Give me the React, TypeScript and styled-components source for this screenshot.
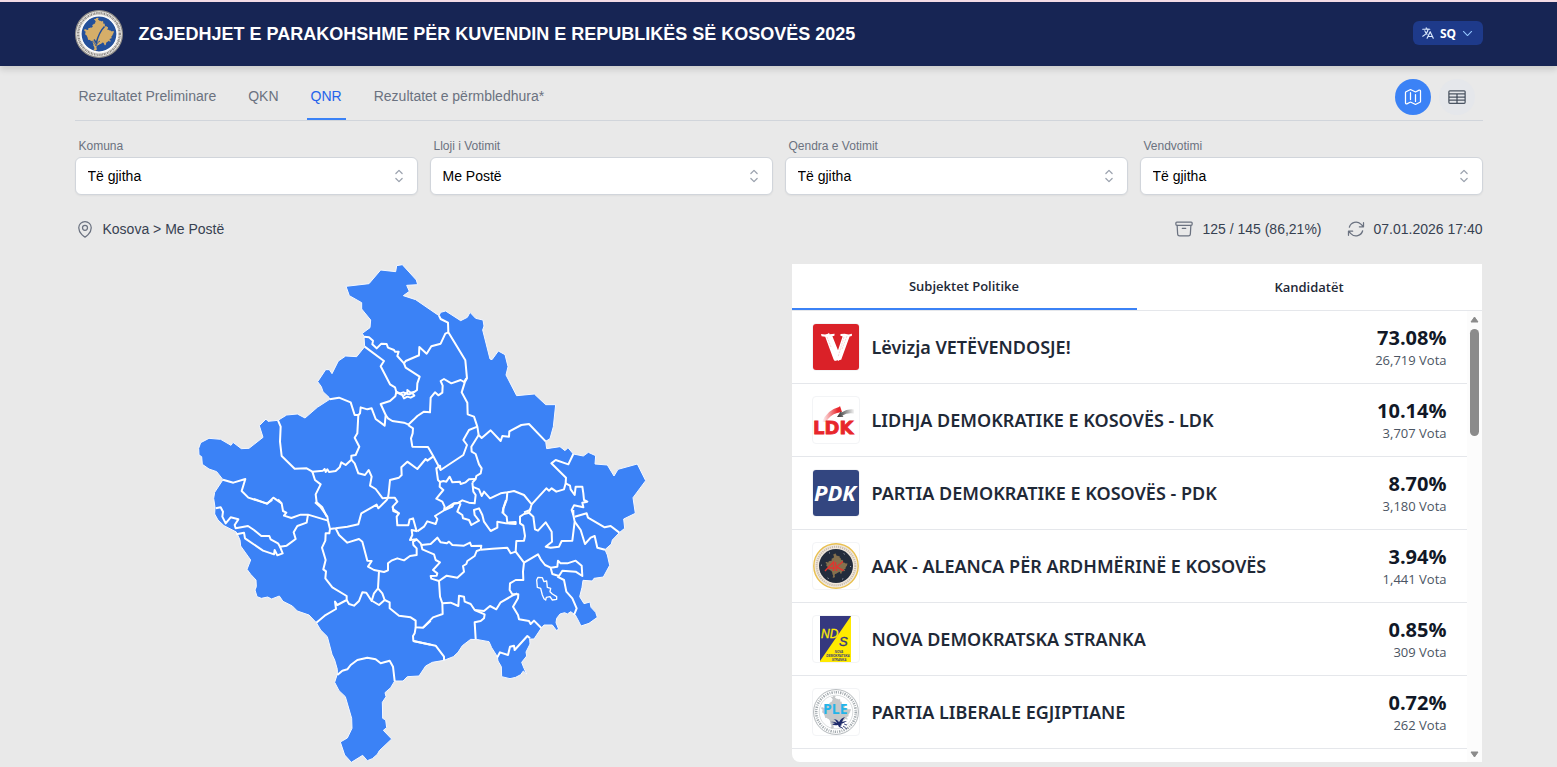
import React from "react";
import styled, { createGlobalStyle } from "styled-components";
import {
  HiOutlineMap,
  HiOutlineTableCells,
  HiOutlineArchiveBox,
  HiOutlineArrowPath,
  HiOutlineMapPin,
  HiOutlineLanguage,
  HiOutlineChevronDown,
  HiChevronUpDown,
} from "react-icons/hi2";

const sans = `"Liberation Sans", Arial, sans-serif`;
const humanist = `"Noto Sans", "Open Sans", sans-serif`;
const humanistLight = `"Open Sans", "Noto Sans", sans-serif`;

const GlobalStyle = createGlobalStyle`
  *, *::before, *::after { box-sizing: border-box; }
  html { background: #e9e9e9; }
  body { margin: 0; font-family: ${sans}; font-size: 14px; color: #374151; overflow-x: hidden; }
  button, select { font: inherit; }
`;

const Container = styled.div`
  width: 100%;
  max-width: 1440px;
  margin: 0 auto;
  padding: 0 16px;
`;

const Header = styled.header`
  background: #172554;
  border-top: 2px solid #f3dbe5;
  box-shadow: 0 4px 6px rgba(0, 0, 0, 0.12);
`;

const HeaderInner = styled(Container)`
  display: flex;
  align-items: center;
  gap: 16px;
  height: 64px;
`;

const Title = styled.h1`
  flex: 1;
  margin: 0;
  font-size: 18px;
  line-height: 28px;
  font-weight: 700;
  color: #fff;
`;

const LanguageButton = styled.button`
  display: flex;
  align-items: center;
  justify-content: space-between;
  width: 70px;
  height: 24px;
  margin-bottom: 2px;
  padding: 0 8px;
  border: 0;
  border-radius: 6px;
  background: #1e3a8a;
  color: #fff;
  font-family: ${humanist};
  font-size: 12px;
  font-weight: 700;
  svg { color: #dbeafe; stroke-width: 2px; }
  svg:last-child { color: #93c5fd; }
`;

const NavBar = styled.div`
  display: flex;
  align-items: center;
  justify-content: space-between;
  height: 55px;
  border-bottom: 1px solid #d1d5db;
`;

const NavTabs = styled.nav`
  display: flex;
  gap: 24px;
  height: 100%;
`;

const NavLink = styled.a<{ $active?: boolean }>`
  display: flex;
  align-items: center;
  padding: 8px 4px 0;
  border-bottom: 2px solid ${(p) => (p.$active ? "#3b82f6" : "transparent")};
  color: ${(p) => (p.$active ? "#2563eb" : "#6b7280")};
  text-decoration: none;
`;

const ViewToggle = styled.div`
  display: flex;
  gap: 8px;
  padding: 8px 8px 0 0;
`;

const RoundButton = styled.button<{ $active?: boolean }>`
  display: grid;
  place-items: center;
  width: 36px;
  height: 36px;
  padding: 0;
  border: 0;
  border-radius: 50%;
  background: ${(p) => (p.$active ? "#3b82f6" : "#e5e7eb")};
  color: ${(p) => (p.$active ? "#fff" : "#4b5563")};
`;

const Filters = styled.div`
  display: grid;
  grid-template-columns: repeat(4, 1fr);
  gap: 12px;
  padding-top: 17px;
`;

const FilterLabel = styled.label`
  display: block;
  padding: 0 4px 3px;
  font-size: 12px;
  line-height: 16px;
  color: #6b7280;
`;

const SelectBox = styled.div`
  position: relative;
  height: 38px;
  svg {
    position: absolute;
    right: 9px;
    top: 9px;
    color: #9ca3af;
    pointer-events: none;
  }
`;

const Select = styled.select`
  appearance: none;
  width: 100%;
  height: 100%;
  padding: 0 40px 0 12px;
  border: 1px solid #d1d5db;
  border-radius: 6px;
  background: #fff;
  box-shadow: 0 1px 2px rgba(0, 0, 0, 0.05);
  color: #000;
`;

const StatusBar = styled.div`
  display: flex;
  align-items: center;
  gap: 24px;
  padding-top: 24px;
  height: 44px;
`;

const StatusItem = styled.span<{ $grow?: boolean }>`
  display: flex;
  align-items: center;
  gap: 8px;
  flex: ${(p) => (p.$grow ? 1 : "none")};
  svg { color: #6b7280; }
`;

const Columns = styled.div`
  display: grid;
  grid-template-columns: 1fr 1fr;
  gap: 27px;
  padding: 25px 1px 4px 0;
`;

const MapPane = styled.section`
  display: flex;
  justify-content: center;
  svg { display: block; }
`;

const Panel = styled.section`
  display: flex;
  flex-direction: column;
  height: 498px;
  border-radius: 0 0 0 8px;
  overflow: hidden;
  background: #fff;
  font-family: ${humanist};
`;

const PanelTabs = styled.div`
  display: flex;
  height: 47px;
  flex: none;
  border-bottom: 1px solid #e5e7eb;
`;

const PanelTab = styled.button<{ $active?: boolean }>`
  flex: 1;
  padding: 0;
  border: 0;
  border-bottom: ${(p) => (p.$active ? "2px solid #3b82f6" : "0")};
  background: none;
  font-family: ${humanistLight};
  font-size: 13px;
  font-weight: 600;
  color: #1f2937;
`;

const ListArea = styled.div`
  display: flex;
  flex: 1;
  min-height: 0;
`;

const PartyList = styled.ul`
  flex: 1;
  margin: 0;
  padding: 0;
  list-style: none;
  overflow-y: auto;
  scrollbar-width: none;
`;

const PartyRow = styled.li`
  display: flex;
  align-items: center;
  gap: 12px;
  height: 73px;
  padding: 0 20px;
  border-bottom: 1px solid #e5e7eb;
`;

const PartyLogo = styled.span`
  flex: none;
  width: 48px;
  height: 48px;
  border: 1px solid #f3f4f6;
  border-radius: 4px;
  overflow: hidden;
  svg { display: block; }
`;

const PartyName = styled.span`
  flex: 1;
  font-size: 18px;
  line-height: 28px;
  font-weight: 600;
  color: #1f2937;
`;

const PartyResult = styled.div`
  padding-top: 2px;
  text-align: right;
`;

const Percent = styled.div`
  font-family: ${humanistLight};
  font-size: 20px;
  line-height: 24px;
  font-weight: 700;
  color: #111827;
`;

const Votes = styled.div`
  font-family: ${humanistLight};
  font-size: 13px;
  line-height: 20px;
  color: #4b5563;
`;

const ScrollTrack = styled.div`
  display: flex;
  flex-direction: column;
  align-items: center;
  width: 15px;
  padding: 5px 0 4px;
  background: #fcfcfc;
`;

const ScrollThumb = styled.div`
  width: 9px;
  height: 107px;
  margin: 6px 0 auto;
  border-radius: 5px;
  background: #8b8b8b;
`;

type Pt = [number, number];
const parse = (s: string): Pt[] =>
  s.trim().split(/\s+/).map((p) => p.split(",").map(Number) as Pt);
const move = (s: string, dx: number, dy: number) =>
  parse(s).map(([x, y]) => `${x + dx},${y + dy}`).join(" ");

/* The map is drawn in four sheets: north-west, north-east, south-west, south-east. */
const EAST = 630;
const SOUTH = 735;

const border = [
  move("466,94 535,86 570,45 615,50 618,32 635,29 677,75 681,89 648,91 656,109 638,122 675,134 720,165", 0, 0),
  move("115,182 120,172 135,168 180,197 200,187 208,172 225,190 247,195 250,213 246,225 268,312 274,314 293,288 313,299 322,335 316,360 348,422 401,417 435,449 465,449 458,515 448,551 435,559 438,581 478,575 493,587 502,578 518,597 548,603 563,592 585,602 583,627 620,630 640,663 652,643 710,627 735,677 697,728", EAST, 0),
  move("698,0 704,40 669,57 672,85 656,98 635,120 632,132 613,149 620,165 627,196 608,231 580,235 575,243 547,241 544,262 537,290 550,311 568,306 571,322 585,337 590,352 565,370 541,378 532,360 524,345 510,335 500,342 492,338 478,342 468,355 466,368 474,388 467,391 455,375 430,375 422,384 400,417 387,417 388,432 376,456 378,468 363,487 370,505 378,522 368,513 360,524 345,532 328,536 303,530 302,500 292,483 290,470 273,443 265,425 232,419 210,418 185,437 172,457 158,470 130,481 95,487 75,498 55,528 20,530", EAST, SOUTH),
  move("637,543 612,543 600,563 583,578 586,590 575,607 576,655 585,660 588,683 578,691 603,717 566,752 560,763 545,776 530,782 516,766 482,787 462,765 449,726 470,714 484,685 483,655 464,590 445,572 432,547 440,522 440,508 432,480 424,463 410,410 390,390 377,368 355,345 320,333 305,318 277,304 266,288 243,297 231,291 212,295 199,290 193,270 197,260 196,240 180,223 169,208 180,180 150,138 148,120 137,96 100,77 82,60 72,42 73,22", 0, SOUTH),
  move("69,730 72,712 97,674 78,650 55,642 35,628 33,605 25,600 24,580 30,563 55,550 90,553 121,571 127,562 152,581 175,580 217,547 206,512 226,492 232,499 262,496 288,480 320,477 343,489 380,457 417,433 415,427 397,410 392,395 381,380 405,344 416,344 424,356 443,318 465,303 498,305 522,275 520,245 515,235 538,218 540,195 513,162 513,143 476,122", 0, 0),
].join(" ");

const northWest = [
  "520,245 535,247 547,257 545,268 558,280 572,266 588,267 592,278 610,285 613,290 624,290 620,303 640,325 645,318 687,300",
  "522,275 580,318 570,334 598,388 613,397 617,411 628,415 638,412 650,416 650,405 660,413 672,410",
  "617,411 635,420 640,430 650,425 660,428 671,422 665,414 655,418 645,415 640,422",
  "617,411 614,424 598,438 570,447 585,480 582,512 555,492 543,460 530,463 510,457 508,475 503,480",
  "417,433 445,428 480,442 492,480 503,480 500,535 492,548 506,575 495,600 482,602 482,614 465,630 452,622 447,637 435,648 415,651 410,643 405,651 402,642 397,647 365,650 348,640 312,641 273,603 268,560 270,515 262,496",
  "585,480 592,490 605,498 640,503 652,508",
  "482,614 492,625 503,655 523,660 534,645 543,665 538,692 555,702 576,730 592,728",
  "97,674 128,683 164,672 153,708 173,728 230,746 248,728 273,745",
  "365,650 373,675 390,688 375,718 378,742 395,757 408,785",
  "592,728 612,728 620,740 606,755 608,768 625,775",
];

const northEast = [
  "55,300 56,276 78,296 92,274 120,266 134,236 143,232",
  "115,182 120,192 142,203 143,232 194,316 199,370 193,380 183,412 200,443 201,478 220,485 230,515 234,540 243,549 270,526 300,558 305,543 325,545 326,529 362,510 385,507 435,559",
  "10,325 15,338 57,365 50,385 49,405 40,412",
  "22,510 40,493 50,483 70,470 88,472 90,428 103,412 113,421 125,413 126,392 120,378 130,372 152,385 180,375 190,381 197,370",
  "22,510 37,520 36,535 31,550 35,575 82,576 98,604 120,645 188,600 199,570 188,555 205,525 230,515",
  "98,604 80,617 75,612 50,642 20,620 2,637 3,660 -5,668 -32,675 -36,715 -38,728",
  "234,540 212,575 213,590 225,597 235,628 243,640 240,655 227,663 225,672 215,683",
  "225,672 205,673 195,682 180,687 178,680 155,682 147,665 137,680 128,678 118,681",
  "120,645 118,632 107,640 112,675 118,681 117,695 128,705 107,731 125,740 132,755 130,765",
  "215,683 218,710 225,720 222,745 205,743 185,736 170,745 158,746 132,762",
  "215,695 235,703 243,723 250,710 268,730 300,715 320,712 340,708 370,720 393,748 388,765 370,772",
  "320,712 318,735 308,760 305,775",
  "393,748 437,700 445,707 453,700 467,710 490,703 495,685 496,668 452,625 465,615 503,628 518,597",
  "495,685 508,692 510,703 522,720 525,695 545,695 548,715 550,735 560,740 545,743 548,757 520,751 513,765 518,780",
];

const southWest = [
  "190,-3 228,11 245,0",
  "262,-2 273,10 277,33 287,38 280,47 302,54 330,44 352,44 412,62",
  "75,25 90,22 97,35 95,50 105,70 120,52 143,58 132,75 135,85 172,78 190,90 212,108 236,108 240,118 262,130 268,140 288,137 315,117 309,97 320,78 348,68 352,44",
  "137,103 160,98 163,115 217,152 250,163 252,150 260,166 276,160 268,140",
  "373,7 390,22 410,50 412,62 418,87 416,100 405,100 404,122 394,143 405,180 398,208 406,214 404,235 425,262 468,288 468,300 440,315 433,305 436,327 402,347 377,368",
  "418,87 435,85 470,80 503,73 512,40 558,14 563,25 588,0 592,-7",
  "435,85 445,105 470,128 505,117 515,125 530,182 543,183 532,200 550,210 565,213 562,265 550,280 543,303 527,278 515,277 505,303 490,317 475,312 468,300",
  "565,213 580,216 592,211 592,190 602,182 620,175 640,181 658,168 678,165 678,145 668,135 667,125 680,118",
  "562,265 575,280 582,300 565,315 545,303",
  "582,300 597,307 597,325 625,347 660,352 675,362 675,382 697,383 720,362",
  "675,382 672,400 667,408 668,423 720,434",
  "440,525 455,512 470,508 480,495 500,480 530,473 555,478 570,490 597,482 607,500 612,543",
  "606,20 608,28 625,40 618,50 620,76 653,76 657,58 667,55 678,94",
];

const southEast = [
  "50,94 70,80 80,64 105,72 110,57 103,48 132,30 155,20 160,10 180,8",
  "50,94 33,90 35,105 28,120 48,118 60,130 62,135 90,132 110,113 120,127 138,130 145,125 155,135 190,137 208,128 212,138 242,137 240,149",
  "62,135 65,148 100,163 105,180 118,187 97,210 110,220 108,227 90,228 92,236 115,243 138,227 170,233 190,215 187,198 197,192 200,183 222,168 228,153 240,149",
  "240,149 275,146 320,143 330,160 345,155 370,188",
  "345,155 347,123 370,122 373,108 368,77 358,70 358,50 370,42 385,38 390,25",
  "385,38 398,50 403,88 412,92 435,67 453,95 454,125 435,140 450,143 475,140 483,123 515,122 522,65 518,45 518,30",
  "370,188 412,163 420,178 433,195 450,203 470,200 472,182 480,190 500,190 525,182 543,197 545,228 525,215 485,212 475,228 455,222 450,203",
  "470,230 490,240 497,275 515,295 528,325 520,345",
  "370,188 367,215 368,240 345,240 328,250 327,270 335,283 353,283 352,295 337,320 352,345 355,358 385,363 390,372 400,362 422,384",
  "350,280 335,287 300,307 287,328 268,318 250,333 222,330 210,312 192,305 190,290 175,287 173,318 150,308 125,310",
  "115,243 118,290 125,310 126,342 97,352 67,383",
  "38,423 105,437 130,470 130,481",
  "222,330 252,343 250,355 240,363 222,367 225,417",
  "290,472 298,457 322,465 328,440 340,437 342,450 380,408 388,415",
  "522,50 558,40 562,53 612,82 630,78 656,98",
  "522,65 540,90 553,132 570,113 582,108 590,143 613,149",
  "180,10 170,35 185,45 187,55 205,60 212,75 235,62 222,45 220,30 235,25 245,45 250,65 270,93 290,83 290,65 315,70 345,72 345,66 320,68 318,50 308,40 308,25 316,0",
];

const sheets = [
  { lines: northWest, dx: 0, dy: 0 },
  { lines: northEast, dx: EAST, dy: 0 },
  { lines: southWest, dx: 0, dy: SOUTH },
  { lines: southEast, dx: EAST, dy: SOUTH },
];

const KosovoMap = () => (
  <svg width="460" height="500" viewBox="-2 27 1380 1500" role="img" aria-label="Kosova">
    <polygon points={border} fill="#3b82f6" stroke="#f5f8ff" strokeWidth="3" strokeLinejoin="round" />
    <g fill="none" stroke="#fff" strokeWidth="6" strokeLinejoin="round">
      {sheets.map(({ lines, dx, dy }) =>
        lines.map((line) => <polyline key={line} points={move(line, dx, dy)} />)
      )}
      <polygon
        strokeWidth="4"
        points={move("408,240 412,232 425,233 430,245 438,243 440,262 450,265 448,275 455,282 468,290 468,298 455,300 448,290 437,292 435,300 430,296 425,285 420,265 410,262", EAST, SOUTH)}
      />
    </g>
  </svg>
);

const Silhouette = ({ fill, x, y, size }: { fill: string; x: number; y: number; size: number }) => (
  <svg x={x} y={y} width={size} height={size} viewBox="0 0 1380 1530">
    <polygon points={border} fill={fill} />
  </svg>
);

const Seal = () => (
  <svg width="48" height="48" viewBox="0 0 48 48" aria-hidden="true">
    <circle cx="24" cy="24" r="23.4" fill="#f1efec" stroke="#8e8b86" strokeWidth="1.2" />
    <circle cx="24" cy="24" r="20.8" fill="none" stroke="#8f8b86" strokeWidth="2.4" strokeDasharray="1.3 0.7 0.8 0.5" />
    <circle cx="24" cy="24" r="18" fill="#24509a" stroke="#fff" strokeWidth="1.2" />
    <Silhouette fill="#d5ae69" x={7} y={7} size={34} />
    <path d="M29.5 16.5Q24 22 21.3 33L19 29.5" fill="none" stroke="#24509a" strokeWidth="1.5" />
    <path d="M17 31q3 1 4 5q1-4 4-5" fill="none" stroke="#24509a" strokeWidth="0.8" />
  </svg>
);

const VvLogo = () => (
  <svg width="46" height="46" viewBox="0 0 46 46">
    <rect width="46" height="46" fill="#da2128" />
    <path
      d="M8 10l4 .4 3-.6 1-1 .6 1.4 5-.4-.2 2-2 .4 5.6 14 4.6-13.6-2.4-1 .4-1.6 4-.2 4 .6 3.4-.6-.2 2.2-2.2.4-8.4 23.4-1.8.2-.6 1-1-.8-3 .8-1.2-1.6L12.200 12.800l-3.600-.6z"
      fill="#fff"
    />
    <path d="M31 13l-6 20M14 13l4 10M34 12l-5 13" stroke="#eb8f92" strokeWidth="0.4" strokeDasharray="2 1" />
  </svg>
);

const LdkLogo = () => (
  <svg width="46" height="46" viewBox="0 0 46 46">
    <defs>
      <linearGradient id="ldkRed"><stop stopColor="#fff" /><stop offset="0.8" stopColor="#e8262b" /></linearGradient>
      <linearGradient id="ldkGrey"><stop stopColor="#2c2c2c" /><stop offset="1" stopColor="#f2f2f2" /></linearGradient>
    </defs>
    <path d="M9 25Q14 13 26 10l1-1 2 6-5 1Q17 18 13 25z" fill="url(#ldkRed)" />
    <path d="M24 20l4-6 .5 1.500q6-4 12.500-3v4q-7-1-11.500 2l1 1.500z" fill="url(#ldkGrey)" />
    <text x="0" y="37" fontFamily="DejaVu Sans, sans-serif" fontWeight="700" fontSize="18" letterSpacing="0" fill="#e8262b" stroke="#e8262b" strokeWidth="0.8">LDK</text>
  </svg>
);

const PdkLogo = () => (
  <svg width="46" height="46" viewBox="0 0 46 46">
    <rect width="46" height="46" fill="#334680" />
    <text x="1" y="31" fontFamily="Noto Sans, sans-serif" fontWeight="700" fontStyle="italic" fontSize="22" fill="#fff">PDK</text>
  </svg>
);

const AakLogo = () => (
  <svg width="46" height="46" viewBox="0 0 46 46">
    <circle cx="23" cy="23" r="22.200" fill="#f1e8dc" stroke="#e9c050" strokeWidth="1.400" />
    <circle cx="23" cy="23" r="19.300" fill="none" stroke="#c9bdaf" strokeWidth="2" strokeDasharray="1.200 0.900" />
    <circle cx="23" cy="23" r="17" fill="#232c3c" />
    <Silhouette fill="#85704d" x={11} y={10} size={25} />
    <circle cx="23" cy="23" r="14.600" fill="none" stroke="#cfd3da" strokeWidth="1" strokeDasharray="1 14.300" />
    <path d="M12 28l8.500-9v9M15 25h7M22.500 19l1 9M30 18.500l-6.500 5.500 7 3.500" fill="none" stroke="#e0352f" strokeWidth="1.400" />
  </svg>
);

const NdsLogo = () => (
  <svg width="46" height="46" viewBox="0 0 46 46">
    <rect x="7" width="31" height="46" fill="#ffea00" />
    <path d="M7 0h31L7 45z" fill="#35387f" />
    <g fontFamily="Liberation Sans Narrow, Liberation Sans, sans-serif" fontStyle="italic">
      <text x="8" y="22" fontSize="12" fill="#ffea00" stroke="#ffea00" strokeWidth="0.300">ND</text>
      <text x="26" y="30" fontSize="13" fill="#35387f" stroke="#35387f" strokeWidth="0.400">S</text>
      <g fontSize="3" fontWeight="700" fill="#35387f" textAnchor="middle">
        <text x="26" y="37">NOVA</text>
        <text x="25" y="41">DEMOKRATSKA</text>
        <text x="26" y="45">STRANKA</text>
      </g>
    </g>
  </svg>
);

const PleLogo = () => (
  <svg width="46" height="46" viewBox="0 0 46 46">
    <circle cx="23" cy="23" r="22.400" fill="#fff" stroke="#7e878c" strokeWidth="0.600" />
    <circle cx="23" cy="23" r="19.800" fill="none" stroke="#a3aaae" strokeWidth="2.600" strokeDasharray="1.400 1.100 0.800 1.100" />
    <circle cx="23" cy="23" r="16.800" fill="#fff" stroke="#b5babd" strokeWidth="0.500" />
    <Silhouette fill="#c6c8c9" x={6} y={6} size={34} />
    <text x="10" y="25" fontFamily="Open Sans, sans-serif" fontWeight="700" fontSize="14" fill="#22b4ea">PLE</text>
    <path d="M17 33q4-1 7 1q-2-4-4-4q4 0 6 3q2-4 6-5q-2 2-3 5q3-1 5-1q-3 2-6 3l1 1-2 1 4 3-5-2-1-2q-4 1-6-1q2 0 3-1q-3-1-5-1z" fill="#1e2b6b" />
    <path d="M31 35l3 1M30 37l4 3" stroke="#1e2b6b" strokeWidth="0.800" />
  </svg>
);

const filters = [
  { id: "komuna", label: "Komuna", value: "Të gjitha" },
  { id: "lloji", label: "Lloji i Votimit", value: "Me Postë" },
  { id: "qendra", label: "Qendra e Votimit", value: "Të gjitha" },
  { id: "vendvotimi", label: "Vendvotimi", value: "Të gjitha" },
];

const parties = [
  { name: "Lëvizja VETËVENDOSJE!", percent: "73.08%", votes: "26,719", Logo: VvLogo },
  { name: "LIDHJA DEMOKRATIKE E KOSOVËS - LDK", percent: "10.14%", votes: "3,707", Logo: LdkLogo },
  { name: "PARTIA DEMOKRATIKE E KOSOVËS - PDK", percent: "8.70%", votes: "3,180", Logo: PdkLogo },
  { name: "AAK - ALEANCA PËR ARDHMËRINË E KOSOVËS", percent: "3.94%", votes: "1,441", Logo: AakLogo },
  { name: "NOVA DEMOKRATSKA STRANKA", percent: "0.85%", votes: "309", Logo: NdsLogo },
  { name: "PARTIA LIBERALE EGJIPTIANE", percent: "0.72%", votes: "262", Logo: PleLogo },
];

export default function App() {
  return (
    <>
      <GlobalStyle />
      <Header>
        <HeaderInner>
          <Seal />
          <Title>ZGJEDHJET E PARAKOHSHME PËR KUVENDIN E REPUBLIKËS SË KOSOVËS 2025</Title>
          <LanguageButton type="button">
            <HiOutlineLanguage size={14} />
            SQ
            <HiOutlineChevronDown size={13} />
          </LanguageButton>
        </HeaderInner>
      </Header>
      <Container as="main">
        <NavBar>
          <NavTabs>
            <NavLink href="#preliminare">Rezultatet Preliminare</NavLink>
            <NavLink href="#qkn">QKN</NavLink>
            <NavLink href="#qnr" $active>QNR</NavLink>
            <NavLink href="#permbledhura">Rezultatet e përmbledhura*</NavLink>
          </NavTabs>
          <ViewToggle>
            <RoundButton type="button" $active aria-label="Harta"><HiOutlineMap size={20} /></RoundButton>
            <RoundButton type="button" aria-label="Tabela"><HiOutlineTableCells size={20} /></RoundButton>
          </ViewToggle>
        </NavBar>
        <Filters>
          {filters.map((f) => (
            <div key={f.id}>
              <FilterLabel htmlFor={f.id}>{f.label}</FilterLabel>
              <SelectBox>
                <Select id={f.id} defaultValue={f.value}>
                  <option>{f.value}</option>
                </Select>
                <HiChevronUpDown size={20} />
              </SelectBox>
            </div>
          ))}
        </Filters>
        <StatusBar>
          <StatusItem $grow><HiOutlineMapPin size={20} />Kosova &gt; Me Postë</StatusItem>
          <StatusItem><HiOutlineArchiveBox size={20} />125 / 145 (86,21%)</StatusItem>
          <StatusItem><HiOutlineArrowPath size={20} />07.01.2026 17:40</StatusItem>
        </StatusBar>
        <Columns>
          <MapPane><KosovoMap /></MapPane>
          <Panel>
            <PanelTabs>
              <PanelTab type="button" $active>Subjektet Politike</PanelTab>
              <PanelTab type="button">Kandidatët</PanelTab>
            </PanelTabs>
            <ListArea>
              <PartyList>
                {parties.map(({ name, percent, votes, Logo }) => (
                  <PartyRow key={name}>
                    <PartyLogo><Logo /></PartyLogo>
                    <PartyName>{name}</PartyName>
                    <PartyResult>
                      <Percent>{percent}</Percent>
                      <Votes>{votes} Vota</Votes>
                    </PartyResult>
                  </PartyRow>
                ))}
              </PartyList>
              <ScrollTrack aria-hidden="true">
                <svg width="9" height="7" viewBox="0 0 9 7"><path d="M4.5 1L8 6H1z" fill="#8b8b8b" stroke="#8b8b8b" strokeLinejoin="round" /></svg>
                <ScrollThumb />
                <svg width="9" height="7" viewBox="0 0 9 7"><path d="M4.5 6L8 1H1z" fill="#8b8b8b" stroke="#8b8b8b" strokeLinejoin="round" /></svg>
              </ScrollTrack>
            </ListArea>
          </Panel>
        </Columns>
      </Container>
    </>
  );
}
